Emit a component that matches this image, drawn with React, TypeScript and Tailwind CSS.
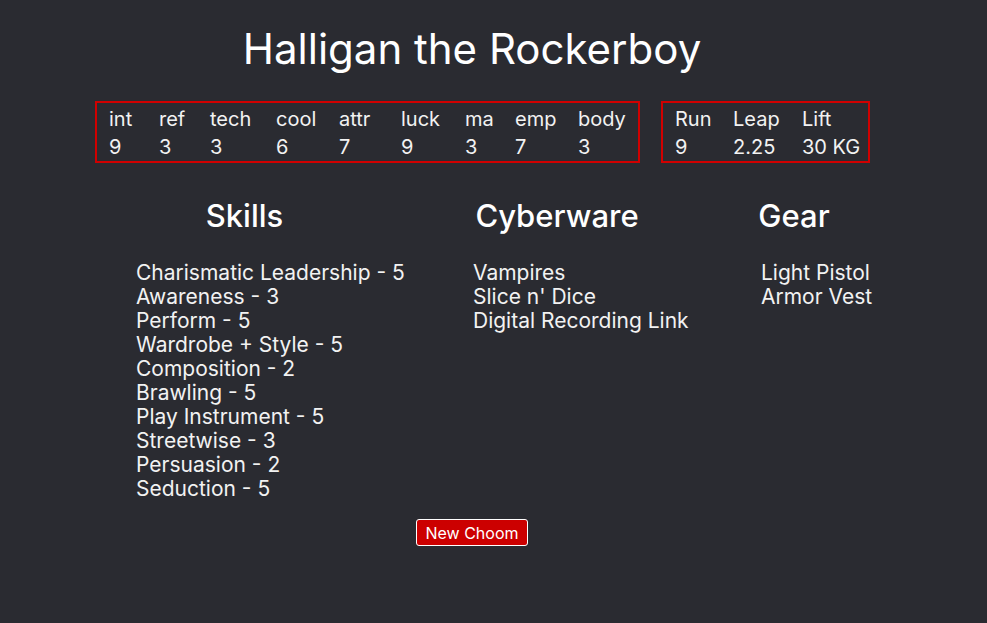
const stats = [
  { label: "int", value: "9", w: "w-[50px]" },
  { label: "ref", value: "3", w: "w-[51px]" },
  { label: "tech", value: "3", w: "w-[66px]" },
  { label: "cool", value: "6", w: "w-[63px]" },
  { label: "attr", value: "7", w: "w-[62px]" },
  { label: "luck", value: "9", w: "w-[64px]" },
  { label: "ma", value: "3", w: "w-[50px]" },
  { label: "emp", value: "7", w: "w-[63px]" },
  { label: "body", value: "3", w: "w-[48px]" },
];

const derived = [
  { label: "Run", value: "9", w: "w-[58px]" },
  { label: "Leap", value: "2.25", w: "w-[69px]" },
  { label: "Lift", value: "30 KG", w: "w-[54px]" },
];

const skills = [
  "Charismatic Leadership - 5",
  "Awareness - 3",
  "Perform - 5",
  "Wardrobe + Style - 5",
  "Composition - 2",
  "Brawling - 5",
  "Play Instrument - 5",
  "Streetwise - 3",
  "Persuasion - 2",
  "Seduction - 5",
];

const cyberware = ["Vampires", "Slice n' Dice", "Digital Recording Link"];
const gear = ["Light Pistol", "Armor Vest"];

function StatBox({ items }: { items: { label: string; value: string; w: string }[] }) {
  return (
    <div className="flex border-2 border-solid border-[#d00000] px-[12px] pt-[2px]">
      {items.map((s) => (
        <div key={s.label} className={s.w + " shrink-0 whitespace-nowrap text-[20px] leading-[28px]"}>
          <div>{s.label}</div>
          <div>{s.value}</div>
        </div>
      ))}
    </div>
  );
}

function Column({ title, items, width }: { title: string; items: string[]; width: string }) {
  return (
    <div className={width + " shrink-0"}>
      <h2 className="pr-[10px] text-center text-[31px] leading-[38px] font-medium text-white">{title}</h2>
      <ul className="mt-[26px] pl-[40px] text-[21px] leading-[24px]">
        {items.map((item) => (
          <li key={item} className="whitespace-nowrap">
            {item}
          </li>
        ))}
      </ul>
    </div>
  );
}

export default function App() {
  return (
    <div className="min-h-[623px] bg-[#2a2b31] text-[#f2f2f2] font-['Inter',sans-serif]">
      <div className="w-[944px] pt-[23px]">
        <h1 className="text-center text-[42px] leading-[52px] text-white">Halligan the Rockerboy</h1>

        <div className="mt-[26px] flex gap-[21px] pl-[95px]">
          <StatBox items={stats} />
          <StatBox items={derived} />
        </div>

        <div className="mt-[34px] flex gap-[30px] pl-[96px]">
          <Column title="Skills" items={skills} width="w-[307px]" />
          <Column title="Cyberware" items={cyberware} width="w-[258px]" />
          <Column title="Gear" items={gear} width="w-[156px]" />
        </div>

        <div className="mt-[18px] flex justify-center">
          <button className="h-[27px] w-[112px] rounded-[3px] border border-solid border-white bg-[#cc0000] text-[16px] leading-[20px] text-white">
            New Choom
          </button>
        </div>
      </div>
    </div>
  );
}
